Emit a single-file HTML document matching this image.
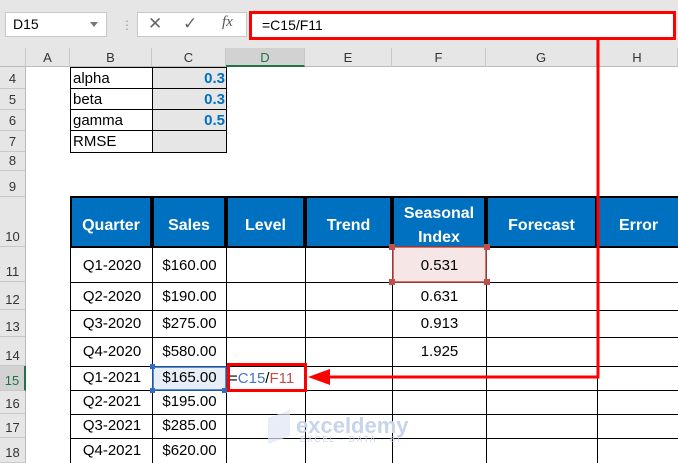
<!DOCTYPE html>
<html><head><style>
*{margin:0;padding:0;box-sizing:border-box}
body{width:678px;height:463px;overflow:hidden;background:#fff;position:relative;font-family:"Liberation Sans",Calibri,sans-serif;font-size:14px;color:#000}
.a{position:absolute}
.rh{position:absolute;left:0;width:26px;background:#e6e6e6;border-bottom:1px solid #c8c8c8;border-right:1px solid #bbb;text-align:center;font-size:13px;color:#333;display:flex;align-items:flex-end;justify-content:center;padding-bottom:2px}
.ch{position:absolute;top:48px;height:19px;background:#e6e6e6;border-right:1px solid #c8c8c8;border-bottom:1px solid #bbb;text-align:center;font-size:13px;color:#333;line-height:19px}
.h{position:absolute;background:#0070c0;color:#fff;font-weight:bold;font-size:16px;display:flex;align-items:center;justify-content:center;text-align:center;line-height:24px;border-right:2px solid #000;padding-top:8px}
.v{position:absolute;left:153px;width:72px;text-align:right;font-size:15px;font-weight:bold;color:#0070c0}
</style></head><body>
<div class="a" style="left:0;top:0;width:678px;height:48px;background:#e6e6e6"></div>
<div class="a" style="left:5px;top:12px;width:102px;height:25px;background:#fff;border:1px solid #c8c8c8;font-size:14px;line-height:23px;padding-left:7px">D15<span style="position:absolute;right:8px;top:9px;border:4px solid transparent;border-top:5px solid #777"></span></div>
<div class="a" style="left:121px;top:18px;color:#999;font-size:12px">⋮</div>
<div class="a" style="left:137px;top:12px;width:110px;height:25px;background:#fff;border:1px solid #c8c8c8"></div>
<div class="a" style="left:148px;top:14px;color:#666;font-size:17px">✕</div>
<div class="a" style="left:183px;top:14px;color:#666;font-size:17px">✓</div>
<div class="a" style="left:222px;top:14px;color:#555;font-size:15px;font-style:italic;font-family:'Liberation Serif',serif">fx</div>
<div class="a" style="left:249px;top:11px;width:427px;height:29px;background:#fff;border:3px solid #f00;font-size:14px;line-height:23px;padding-left:10px">=C15/F11</div>
<div class="ch" style="left:0;width:26px;background:#e6e6e6"></div>
<div class="ch" style="left:26px;width:44px">A</div>
<div class="ch" style="left:70px;width:82px">B</div>
<div class="ch" style="left:152px;width:74px">C</div>
<div class="ch" style="left:226px;width:79px;background:#d2d2d2;border-bottom:2px solid #217346;color:#217346">D</div>
<div class="ch" style="left:305px;width:87px">E</div>
<div class="ch" style="left:392px;width:94px">F</div>
<div class="ch" style="left:486px;width:111px">G</div>
<div class="ch" style="left:597px;width:81px">H</div>
<div class="rh" style="top:67px;height:22px">4</div>
<div class="rh" style="top:89px;height:21px">5</div>
<div class="rh" style="top:110px;height:21px">6</div>
<div class="rh" style="top:131px;height:21px">7</div>
<div class="rh" style="top:152px;height:19px">8</div>
<div class="rh" style="top:171px;height:26px">9</div>
<div class="rh" style="top:197px;height:50px">10</div>
<div class="rh" style="top:247px;height:35px">11</div>
<div class="rh" style="top:282px;height:28px">12</div>
<div class="rh" style="top:310px;height:27px">13</div>
<div class="rh" style="top:337px;height:29px">14</div>
<div class="rh" style="top:366px;height:25px;background:#d2d2d2;border-right:2px solid #217346;color:#217346">15</div>
<div class="rh" style="top:391px;height:23px">16</div>
<div class="rh" style="top:414px;height:24px">17</div>
<div class="rh" style="top:438px;height:25px">18</div>
<div class="a" style="left:70px;top:67px;width:157px;height:86px;border:1px solid #000"></div>
<div class="a" style="left:152px;top:67px;width:75px;height:86px;background:#e6e6e6;border:1px solid #000"></div>
<div class="a" style="left:70px;top:88px;width:157px;border-top:1px solid #000"></div>
<div class="a" style="left:70px;top:109px;width:157px;border-top:1px solid #000"></div>
<div class="a" style="left:70px;top:130px;width:157px;border-top:1px solid #000"></div>
<div class="a" style="left:73px;top:70px;font-size:15px">alpha</div>
<div class="a" style="left:73px;top:91px;font-size:15px">beta</div>
<div class="a" style="left:73px;top:112px;font-size:15px">gamma</div>
<div class="a" style="left:73px;top:133px;font-size:15px">RMSE</div>
<div class="v" style="top:70px">0.3</div>
<div class="v" style="top:91px">0.3</div>
<div class="v" style="top:112px">0.5</div>
<div class="a" style="left:70px;top:196px;width:608px;height:52px;background:#000"></div>
<div class="h" style="left:72px;top:198px;width:80px;height:48px">Quarter</div>
<div class="h" style="left:154px;top:198px;width:72px;height:48px">Sales</div>
<div class="h" style="left:228px;top:198px;width:77px;height:48px">Level</div>
<div class="h" style="left:307px;top:198px;width:85px;height:48px">Trend</div>
<div class="h" style="left:394px;top:198px;width:92px;height:48px">Seasonal<br>Index</div>
<div class="h" style="left:488px;top:198px;width:109px;height:48px">Forecast</div>
<div class="h" style="left:599px;top:198px;width:79px;height:48px;border-right:none">Error</div>
<svg class="a" style="left:0;top:0" width="678" height="463">
<g stroke="#000" stroke-width="1">
<line x1="70.5" y1="247" x2="70.5" y2="463"/><line x1="152.5" y1="247" x2="152.5" y2="463"/><line x1="226.5" y1="247" x2="226.5" y2="463"/><line x1="305.5" y1="247" x2="305.5" y2="463"/><line x1="392.5" y1="247" x2="392.5" y2="463"/><line x1="486.5" y1="247" x2="486.5" y2="463"/><line x1="597.5" y1="247" x2="597.5" y2="463"/>
<line x1="70" y1="282.5" x2="678" y2="282.5"/><line x1="70" y1="310.5" x2="678" y2="310.5"/><line x1="70" y1="337.5" x2="678" y2="337.5"/><line x1="70" y1="366.5" x2="678" y2="366.5"/><line x1="70" y1="390.5" x2="678" y2="390.5"/><line x1="70" y1="414.5" x2="678" y2="414.5"/><line x1="70" y1="438.5" x2="678" y2="438.5"/>
</g>
<rect x="393" y="247" width="93" height="35" fill="#f7e6e6" stroke="#c0504d" stroke-width="1.5"/>
<g fill="#c0504d"><rect x="389" y="244" width="6" height="6"/><rect x="484" y="244" width="6" height="6"/><rect x="389" y="279" width="6" height="6"/><rect x="484" y="279" width="6" height="6"/></g>
<rect x="153" y="367" width="73" height="23" fill="#e8eef7" stroke="#2f6ec4" stroke-width="1.5"/>
<g fill="#2f6ec4"><rect x="150" y="364" width="5" height="5"/><rect x="150" y="388" width="5" height="5"/><rect x="222" y="388" width="5" height="5"/></g>
<polyline points="598,37 598,377 328,377" fill="none" stroke="#f00" stroke-width="3"/>
<polygon points="308,377 330,369 330,385" fill="#f00"/>
<rect x="228.5" y="364.5" width="77" height="26" fill="none" stroke="#f00" stroke-width="3"/>
</svg>
<div class="a" style="left:229px;top:370px;font-size:15px">=<span style="color:#4472c4">C15</span>/<span style="color:#c0504d">F11</span></div>
<div class="a" style="left:72px;top:257px;width:80px;text-align:center;font-size:15px">Q1-2020</div>
<div class="a" style="left:72px;top:288px;width:80px;text-align:center;font-size:15px">Q2-2020</div>
<div class="a" style="left:72px;top:315px;width:80px;text-align:center;font-size:15px">Q3-2020</div>
<div class="a" style="left:72px;top:343px;width:80px;text-align:center;font-size:15px">Q4-2020</div>
<div class="a" style="left:72px;top:369px;width:80px;text-align:center;font-size:15px">Q1-2021</div>
<div class="a" style="left:72px;top:393px;width:80px;text-align:center;font-size:15px">Q2-2021</div>
<div class="a" style="left:72px;top:417px;width:80px;text-align:center;font-size:15px">Q3-2021</div>
<div class="a" style="left:72px;top:442px;width:80px;text-align:center;font-size:15px">Q4-2021</div>
<div class="a" style="left:153px;top:257px;width:73px;text-align:center;font-size:15px">$160.00</div>
<div class="a" style="left:153px;top:288px;width:73px;text-align:center;font-size:15px">$190.00</div>
<div class="a" style="left:153px;top:315px;width:73px;text-align:center;font-size:15px">$275.00</div>
<div class="a" style="left:153px;top:343px;width:73px;text-align:center;font-size:15px">$580.00</div>
<div class="a" style="left:153px;top:369px;width:73px;text-align:center;font-size:15px">$165.00</div>
<div class="a" style="left:153px;top:393px;width:73px;text-align:center;font-size:15px">$195.00</div>
<div class="a" style="left:153px;top:417px;width:73px;text-align:center;font-size:15px">$285.00</div>
<div class="a" style="left:153px;top:442px;width:73px;text-align:center;font-size:15px">$620.00</div>
<div class="a" style="left:393px;top:257px;width:93px;text-align:center;font-size:15px">0.531</div>
<div class="a" style="left:393px;top:288px;width:93px;text-align:center;font-size:15px">0.631</div>
<div class="a" style="left:393px;top:315px;width:93px;text-align:center;font-size:15px">0.913</div>
<div class="a" style="left:393px;top:343px;width:93px;text-align:center;font-size:15px">1.925</div>
<div class="a" style="left:268px;top:414px;width:22px;height:26px;background:#dfe6f3;opacity:.7;transform:skewY(-20deg)"></div>
<div class="a" style="left:296px;top:413px;font-size:22px;font-weight:bold;color:#c8d4ea">exceldemy</div>
<div class="a" style="left:300px;top:435px;font-size:8px;letter-spacing:2px;color:#c8d4ea">EXCEL · DATA · BI</div>
</body></html>
